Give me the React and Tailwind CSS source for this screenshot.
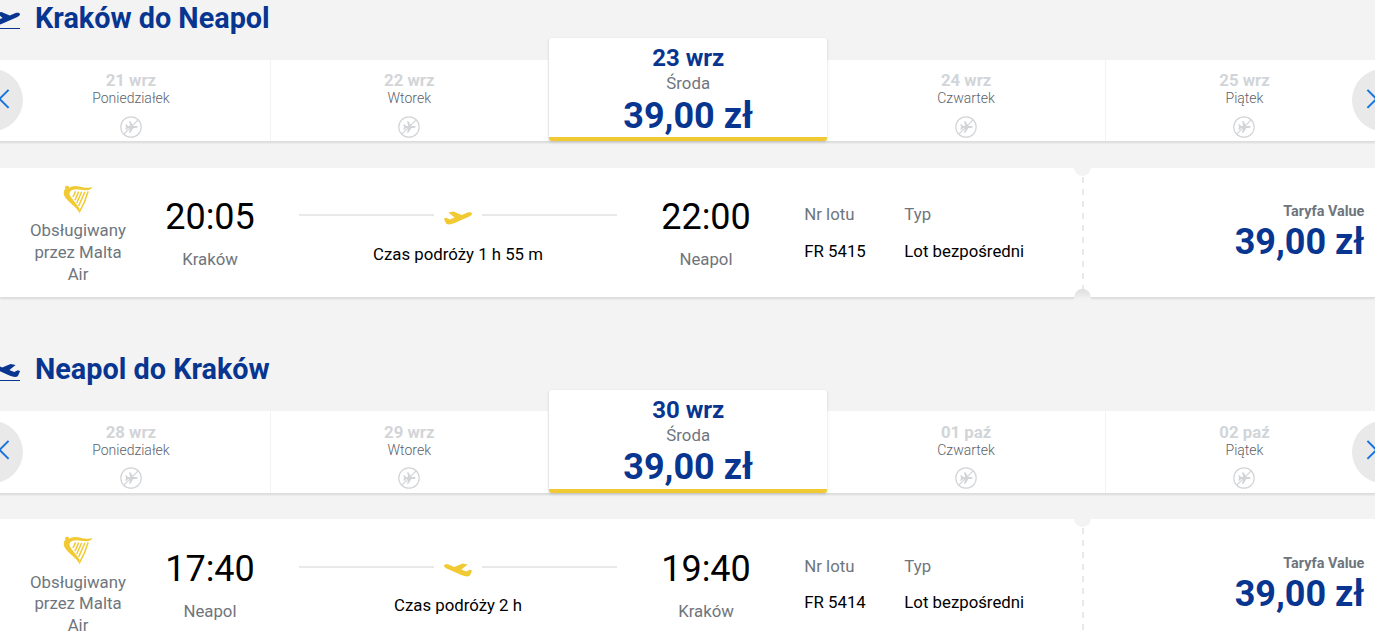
import React from 'react';
import clsx from 'clsx';

const trips = [
  {
    title: 'Kraków do Neapol',
    direction: 'out',
    days: [
      { date: '21 wrz', day: 'Poniedziałek' },
      { date: '22 wrz', day: 'Wtorek' },
      { date: '23 wrz', day: 'Środa', price: '39,00 zł' },
      { date: '24 wrz', day: 'Czwartek' },
      { date: '25 wrz', day: 'Piątek' },
    ],
    flight: {
      departure: '20:05',
      from: 'Kraków',
      arrival: '22:00',
      to: 'Neapol',
      duration: '1 h 55 m',
      number: 'FR 5415',
      price: '39,00 zł',
    },
  },
  {
    title: 'Neapol do Kraków',
    direction: 'in',
    days: [
      { date: '28 wrz', day: 'Poniedziałek' },
      { date: '29 wrz', day: 'Wtorek' },
      { date: '30 wrz', day: 'Środa', price: '39,00 zł' },
      { date: '01 paź', day: 'Czwartek' },
      { date: '02 paź', day: 'Piątek' },
    ],
    flight: {
      departure: '17:40',
      from: 'Neapol',
      arrival: '19:40',
      to: 'Kraków',
      duration: '2 h',
      number: 'FR 5414',
      price: '39,00 zł',
    },
  },
];

const PlaneIcon = ({ direction, className }) => (
  <svg className={className} viewBox="0 0 28 14" fill="currentColor">
    <g transform={direction === 'in' ? 'translate(28 0) scale(-1 1)' : undefined}>
      <path d="M0 7.4 2.2 6.8 5.8 8.4 10.6 6.4 4.4 1.4 9.4.4 17.8 4 23.6 1.6C25.6.9 27.6 1.2 27.9 2.4 28.2 3.7 27 4.7 25.4 5.4L10.6 12C7.4 13.4 4.6 13.8 2.6 13 1.6 11.6.6 9.4 0 7.4Z" />
    </g>
  </svg>
);

const HarpIcon = () => (
  <svg className="h-[29px] w-[30px] text-[#f1c933]" viewBox="0 0 29 29" fill="none" stroke="currentColor">
    <path
      fill="currentColor"
      stroke="none"
      d="M1.8 1.4C2.8.4 5 .4 5.6 2L5.2 3C8 .8 12 .4 16 1.4 20.5 2.5 24.5 3.2 29 2.1 27.5 4.4 25.5 5.3 22.5 5.2 17 5 13 3.4 9.4 4.8 6.8 5.8 6 7.2 6 8.8 6.4 12.4 13.6 18.8 16 23.8L16.4 29C14 23.2 8.6 19.8 4.6 15.8 1.6 12.8-.4 9.6.4 6.4.6 5 1.2 4.4 2.4 3.8 1.6 3.2 1.2 2.2 1.8 1.4Z"
    />
    <path strokeWidth="1.5" d="M12.2 6.4 9.4 12M15.2 6.6 11.4 15.2M18.2 6.8 13.2 18M21.4 6.8 15.2 21" />
    <path strokeWidth="1.6" d="M24.6 6.4C22.6 13.6 19.6 20.6 16.2 26.4" />
  </svg>
);

const NoFlightIcon = () => (
  <svg className="mt-[8.5px] h-[22px] w-[22px] text-[#d2d5d8]" viewBox="0 0 22 22" fill="none" stroke="currentColor">
    <circle cx="11" cy="11" r="10.2" strokeWidth="1.2" />
    <path d="M3.8 18.2 18.2 3.8" strokeWidth="1.2" />
    <path
      fill="currentColor"
      stroke="none"
      d="M5.3 8.3H6.4L8.2 10.1H10.2L9 5.2H10.4L13.4 10.1H16C17 10.1 17.6 10.5 17.6 11S17 11.9 16 11.9H13.4L10.4 16.8H9L10.2 11.9H8.2L6.4 13.7H5.3L6 11Z"
    />
  </svg>
);

const ArrowButton = ({ side }) => (
  <button
    className={clsx(
      'absolute top-[9.5px] flex h-[62px] w-[62px] items-center justify-center rounded-full bg-[#e9e9e9] pb-[3px] text-[#1774de]',
      side === 'left' ? '-left-[31.2px] pl-[22px]' : '-right-[29.8px] pr-[24px]'
    )}
  >
    <svg className="h-5 w-5 shrink-0" viewBox="0 0 20 20" fill="none" stroke="currentColor" strokeWidth="2">
      {side === 'left' ? <path d="M15.6.9 6.6 9.9 15.6 18.9" /> : <path d="M6.4.9 15.4 9.9 6.4 18.9" />}
    </svg>
  </button>
);

const DayTab = ({ item }) => {
  if (item.price) {
    return (
      <div className="relative z-10 -mt-[21.8px] flex h-[103.2px] flex-col items-center rounded-[3px] border-b-4 border-[#f1c933] bg-white shadow-[0_1px_3px_rgba(0,0,0,0.15)]">
        <span className="mt-1 text-2xl leading-8 font-bold text-[#073590]">{item.date}</span>
        <span className="text-[16.8px] leading-[18.2px] text-[#6f757d]">{item.day}</span>
        <span className="mt-[1.6px] text-4xl leading-[44px] font-bold text-[#073590]">{item.price}</span>
      </div>
    );
  }

  return (
    <div className="flex h-full flex-col items-center border-r border-[#f3f3f3] pt-[11.2px]">
      <span className="text-[16.8px] leading-[18px] font-bold text-[#d2d5d8]">{item.date}</span>
      <span className="text-sm leading-[18px] font-light text-[#5c626b]">{item.day}</span>
      <NoFlightIcon />
    </div>
  );
};

const Dates = ({ days }) => (
  <div className="relative -ml-[7.8px] w-[1392px] bg-white shadow-[0_2px_2px_rgba(0,0,0,0.1)]">
    <div className="grid h-[81.4px] grid-cols-5">
      {days.map((item) => (
        <DayTab key={item.date} item={item} />
      ))}
    </div>
    <ArrowButton side="left" />
    <ArrowButton side="right" />
  </div>
);

const Place = ({ time, city, className }) => (
  <div className={clsx('flex shrink-0 flex-col items-center pt-[27.3px]', className)}>
    <span className="text-4xl leading-[44px] text-black">{time}</span>
    <span className="mt-2.5 text-[16.8px] leading-5 text-[#6f757d]">{city}</span>
  </div>
);

const Detail = ({ label, value, className }) => (
  <div className={clsx('shrink-0 pt-[36.2px] text-[16.8px]', className)}>
    <div className="leading-5 text-[#6f757d]">{label}</div>
    <div className="mt-[16.7px] leading-5 text-black">{value}</div>
  </div>
);

const FlightCard = ({ flight, direction }) => (
  <div className="relative flex h-[129px] w-full bg-white shadow-[0_2px_2px_rgba(0,0,0,0.1)]">
    <div className="ml-6 flex w-[108px] shrink-0 flex-col items-center pt-[17px]">
      <HarpIcon />
      <p className="mt-[6.1px] text-center text-[16.8px] leading-[21.8px] text-[#6f757d]">
        Obsługiwany przez Malta Air
      </p>
    </div>
    <Place time={flight.departure} city={flight.from} className="ml-6 w-[108px]" />
    <div className="ml-[35px] w-[318px] shrink-0 pt-[40.2px]">
      <div className="flex h-5 justify-between">
        <span className="mt-1.5 h-0.5 w-[135px] bg-[#e9e9e9]" />
        <PlaneIcon direction={direction} className="mt-[3px] h-3.5 w-7 text-[#f1c933]" />
        <span className="mt-1.5 h-0.5 w-[135px] bg-[#e9e9e9]" />
      </div>
      <p className="mt-[15.7px] text-center text-[16.8px] leading-5 text-black">Czas podróży {flight.duration}</p>
    </div>
    <Place time={flight.arrival} city={flight.to} className="ml-[34px] w-[110px]" />
    <Detail label="Nr lotu" value={flight.number} className="ml-[43.3px] w-[100px]" />
    <Detail label="Typ" value="Lot bezpośredni" className="w-[170px]" />

    {/* Ticket perforation */}
    <div className="absolute inset-y-0 left-[1074px] w-[17px] overflow-hidden">
      <div className="absolute inset-y-0 left-2 w-0.5 bg-[repeating-linear-gradient(to_bottom,#e9e9e9_0,#e9e9e9_6px,transparent_6px,transparent_12px)] bg-[position:0_9px]" />
      <div className="absolute -top-[9px] h-[17px] w-[17px] rounded-full bg-[#f3f3f3]" />
    </div>
    <div className="absolute -bottom-[3px] left-[1074px] h-[11px] w-[17px] rounded-t-full bg-linear-to-b from-[#dedede] to-[#f3f3f3]" />

    <div className="ml-auto flex flex-col items-end pt-[36.3px] pr-[10.6px]">
      <span className="text-[14.4px] leading-4 font-bold text-[#6f757d]">Taryfa Value</span>
      <span className="text-4xl leading-[44px] font-bold text-[#073590]">{flight.price}</span>
    </div>
  </div>
);

const Trip = ({ trip }) => (
  <section className="h-[351.5px] shrink-0">
    <header className="flex h-[59.9px] items-start">
      <div className="-ml-2 mt-[9px] flex w-7 flex-col text-[#073590]">
        <PlaneIcon direction={trip.direction} className="h-[19px] w-7" />
        <span className="h-px w-7 bg-[#073590]" />
      </div>
      <h2 className="-mt-[0.3px] ml-[15px] text-[28.8px] leading-9 font-bold text-[#073590]">{trip.title}</h2>
    </header>
    <Dates days={trip.days} />
    <div className="mt-[26.7px]">
      <FlightCard flight={trip.flight} direction={trip.direction} />
    </div>
  </section>
);

const App = () => {
  return (
    <main className="flex h-[636px] w-full flex-col overflow-hidden bg-[#f3f3f3] font-[Roboto,sans-serif]">
      {trips.map((trip) => (
        <Trip key={trip.title} trip={trip} />
      ))}
    </main>
  );
};

export default App;
